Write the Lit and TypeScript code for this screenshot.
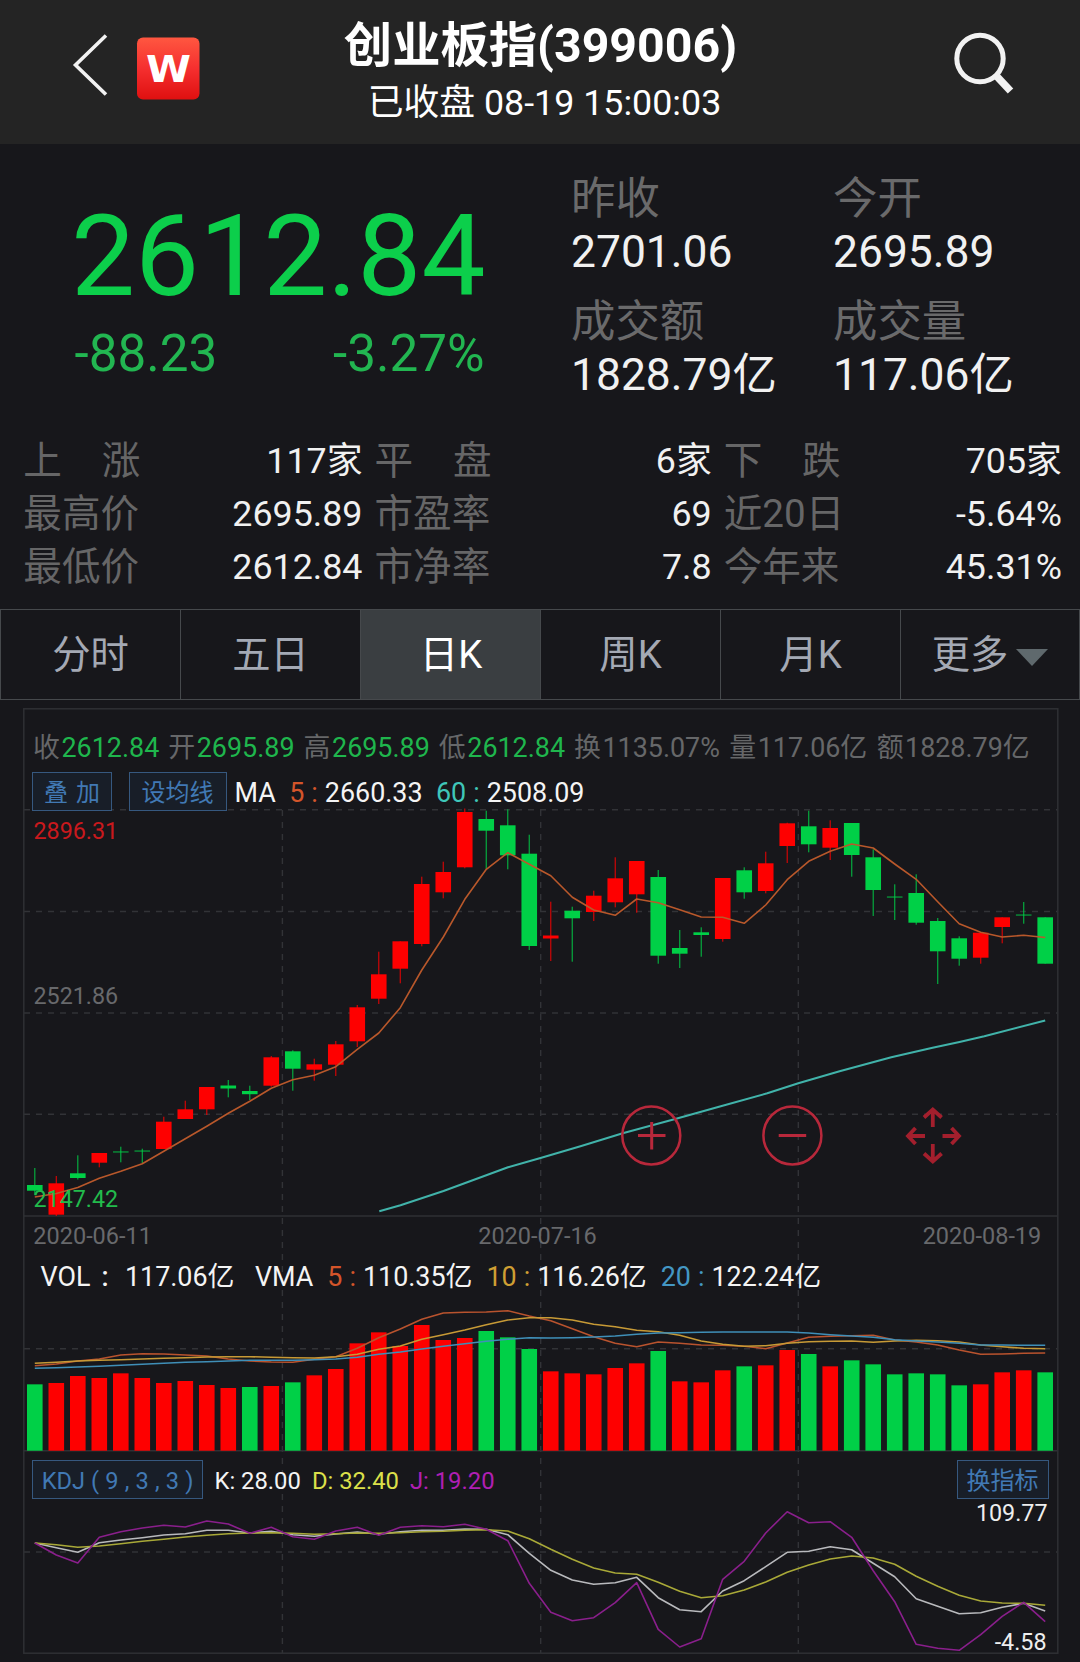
import { LitElement, html, svg, css } from "lit";
import { customElement } from "lit/decorators.js";

const UP = "#fe0000";
const DOWN = "#00d047";

// Trend flag, then high, body top, body bottom and low of each session, in canvas units
type Candle = [string, number, number, number, number];
const CANDLES: Candle[] = [
  ["d", 1168, 1185, 1190.7, 1195], ["u", 1176, 1183.3, 1214.7, 1216], ["d", 1155.3, 1173.3, 1178, 1179.5],
  ["u", 1153, 1153, 1162.7, 1167.3], ["d", 1146.7, 1151.3, 1152.6, 1162.3], ["d", 1148.7, 1150.4, 1151.7, 1163],
  ["u", 1116.7, 1121.7, 1149, 1149], ["u", 1100.7, 1109.3, 1119, 1119], ["u", 1087, 1087, 1109.3, 1115],
  ["d", 1080, 1085.5, 1088.5, 1097.3], ["d", 1085.7, 1091, 1094.2, 1100], ["u", 1056, 1057.3, 1085.7, 1086.7],
  ["d", 1050.3, 1051.3, 1068.7, 1090.7], ["u", 1058.7, 1064.3, 1069.7, 1080.7], ["u", 1041, 1044.3, 1064.7, 1076],
  ["u", 1005, 1007.3, 1041.3, 1047], ["u", 951.7, 974.3, 998.7, 1004], ["u", 941.3, 941.3, 968.7, 983.3],
  ["u", 876.7, 884, 944, 946.3], ["u", 861.7, 872, 892.3, 898.3], ["u", 808.5, 812, 867.3, 868.3],
  ["d", 810.7, 819, 830.7, 869], ["d", 809.3, 825.3, 855.3, 869.3], ["d", 834.7, 853.7, 946, 950],
  ["u", 901.7, 935.5, 938.5, 961], ["d", 906.7, 910.7, 918.3, 961.7], ["u", 890.7, 895.7, 912, 921],
  ["u", 857.3, 878.3, 902.3, 907.3], ["u", 861, 861, 894.3, 912.7], ["d", 870, 877, 955.7, 963.7],
  ["d", 930, 948, 953.7, 968], ["d", 927.3, 932.3, 935, 956.7], ["u", 878, 878, 939, 941.7],
  ["d", 867.3, 870.3, 892.3, 898.7], ["u", 851.7, 863.3, 891, 893.3], ["u", 822.7, 823.3, 846, 863],
  ["d", 810.7, 826.3, 844.3, 852.3], ["u", 820.3, 828, 847.7, 860], ["d", 823, 823, 855, 876.7],
  ["d", 849.3, 857.3, 890, 916], ["d", 884.3, 896.4, 897.7, 920], ["d", 874.3, 893, 922.7, 924.7],
  ["d", 918, 921, 951.3, 984], ["d", 936.3, 938.3, 958.7, 965.7], ["u", 932.7, 932.7, 957.7, 963.7],
  ["u", 917.3, 917.3, 927, 943.3], ["d", 902, 914.4, 915.7, 923.7], ["d", 917.3, 917.3, 963.7, 963.7],
];

const MA5 = [1197, 1193.5, 1187.5, 1178.3, 1171.3, 1163.7, 1151.3, 1138.7, 1126.3, 1113.3, 1101.3, 1088.3, 1079.7, 1075.3, 1066.7, 1049.3, 1033, 1007.7, 970, 937, 899.3, 869.3, 852.7, 864.3, 875.7, 897.3, 910, 915.3, 899, 902.7, 909.7, 917, 917.3, 923.3, 905, 879.7, 861.3, 851.3, 844, 848, 864, 879.3, 901.7, 923.7, 932.3, 937, 935.3, 937.5];
const MA60: [number, number][] = [[379.3, 1211.3], [400.5, 1205.3], [443.5, 1191], [508, 1167.3], [540.5, 1158], [581.3, 1146], [622.7, 1133.3], [674.3, 1119.3], [719, 1106.7], [767.3, 1093.3], [798.3, 1083.3], [839.6, 1071.3], [891.3, 1057.3], [932.6, 1047.7], [959.5, 1042], [984.3, 1036.3], [1045.2, 1020.5]];

// Volume pane: a third of a unit per step, measured from y = 1250
const VOL_TOPS = [403, 399, 378, 384, 370, 384, 399, 393, 405, 414, 411, 408, 397, 376, 357, 280, 247, 288, 225, 270, 264, 243, 262, 297, 364, 370, 373, 354, 340, 303, 394, 397, 361, 349, 346, 300, 312, 349, 331, 343, 373, 370, 373, 406, 403, 367, 361, 367];
const VOL_FALLS = new Set([0, 10, 12, 21, 22, 23, 29, 33, 36, 38, 39, 40, 41, 42, 43, 47]);
const VMA5 = [347, 342, 333, 327, 315, 311, 312, 315, 318, 327, 333, 336, 337, 328, 320, 295, 263, 237, 208, 189, 187, 186, 182, 198, 212, 236, 260, 280, 290, 276, 280, 285, 286, 289, 296, 279, 262, 259, 257, 256, 270, 276, 285, 300, 313, 312, 310, 309];
const VMA10 = [340, 337, 333, 331, 329, 327, 325, 323, 321, 320, 320, 322, 323, 324, 320, 313, 298, 288, 268, 254, 240, 224, 210, 203, 203, 210, 223, 230, 241, 245, 256, 273, 283, 289, 287, 280, 275, 274, 273, 277, 273, 271, 272, 276, 285, 290, 295, 296];
const VMA20 = [355, 353, 351, 349, 346, 343, 340, 337, 335, 333, 331, 331, 331, 329, 327, 322, 313, 306, 297, 289, 281, 274, 268, 263, 264, 263, 261, 258, 253, 249, 248, 247, 246, 246, 246, 246, 249, 254, 258, 262, 269, 273, 276, 280, 285, 285, 286, 286];

// KDJ pane: a third of a unit per step, measured from y = 1450
const KDJ_K = [279, 293, 307, 278, 270, 263, 255, 251, 241, 241, 249, 244, 254, 259, 252, 246, 253, 245, 241, 241, 237, 238, 254, 310, 361, 390, 403, 398, 382, 443, 479, 485, 423, 392, 350, 307, 304, 290, 299, 340, 380, 446, 469, 491, 488, 472, 460, 483];
const KDJ_D = [279, 284, 292, 288, 281, 274, 268, 261, 256, 251, 249, 248, 250, 253, 251, 249, 250, 248, 245, 244, 241, 239, 243, 266, 298, 328, 354, 369, 373, 397, 424, 443, 437, 420, 396, 367, 345, 327, 318, 324, 343, 379, 409, 436, 453, 459, 460, 466];
const KDJ_J = [279, 315, 339, 262, 245, 234, 226, 231, 213, 222, 250, 232, 260, 268, 243, 232, 256, 232, 227, 230, 223, 238, 272, 400, 487, 512, 503, 458, 398, 538, 591, 566, 388, 334, 249, 185, 218, 215, 262, 362, 455, 583, 595, 601, 554, 499, 457, 515];

const xAt = (i: number) => 34.8 + i * 21.498;
const trace = (ys: number[], base = 0, k = 1) =>
  ys.map((y, i) => `${xAt(i).toFixed(1)},${(base + y * k).toFixed(1)}`).join(" ");

@customElement("kline-canvas")
class KlineCanvas extends LitElement {
  static styles = css`
    :host { display: block; }
    svg { display: block; width: 1036px; height: 947px; font-family: Roboto, "Noto Sans CJK SC", sans-serif; font-size: 23.3px; }
    .dash { stroke: #323337; stroke-width: 1.4; stroke-dasharray: 6 6; }
    .rule { stroke: #2f3034; stroke-width: 1.5; fill: none; }
    .line { fill: none; stroke-width: 1.6; stroke-linejoin: round; }
    .long { stroke-width: 2; }
    .grey { fill: #68696c; }
    .date { font-size: 23.5px; }
    .light { fill: #eeeeee; }
    .tool { fill: none; stroke: #b8283b; stroke-width: 2.5; }
    .bold { stroke-width: 3; }
    .arrows { stroke-width: 3.8; stroke: #a31f2d; }
  `;

  render() {
    return html`<svg viewBox="23 708 1036 947">
      ${[809.7, 911.5, 1013, 1114.3, 1348.7, 1552].map((y) => svg`<line class="dash" x1="24" x2="1057" y1=${y} y2=${y} />`)}
      ${[282.4, 540.7, 798.3].map((x) => svg`<line class="dash" x1=${x} x2=${x} y1="810" y2="1653" />`)}
      <rect class="rule" x="23.8" y="708.8" width="1034" height="944.4" />
      <line class="rule" x1="24" x2="1057" y1="1216" y2="1216" />
      <line class="rule" x1="24" x2="1057" y1="1450.7" y2="1450.7" />
      ${CANDLES.map(([t, h, a, b, l], i) => {
        const c = t === "u" ? UP : DOWN;
        return svg`<rect x=${xAt(i) - 0.6} y=${h} width="1.2" height=${l - h} fill=${c} opacity=".8" />
          <rect x=${xAt(i) - 7.8} y=${a} width="15.6" height=${b - a} fill=${c} opacity=${b - a < 2 ? 0.7 : 1} />`;
      })}
      <polyline class="line" stroke="#b9582b" points=${trace(MA5)} />
      <polyline class="line long" stroke="#41b3aa" points=${MA60.map((p) => p.join(",")).join(" ")} />
      <text x="33.5" y="838.7" fill="#c9191d">2896.31</text>
      <text class="grey" x="33.5" y="1004.2">2521.86</text>
      <text x="33.5" y="1207.2" fill="#22bb4c">2147.42</text>
      <text class="grey date" x="33.3" y="1244.2">2020-06-11</text>
      <text class="grey date" x="537.5" y="1244.2" text-anchor="middle">2020-07-16</text>
      <text class="grey date" x="1041.3" y="1244.2" text-anchor="end">2020-08-19</text>

      ${VOL_TOPS.map((v, i) => svg`<rect x=${xAt(i) - 7.8} y=${1250 + v / 3} width="15.6" height=${200.7 - v / 3} fill=${VOL_FALLS.has(i) ? DOWN : UP} />`)}
      <polyline class="line" stroke="#b9532e" points=${trace(VMA5, 1250, 1 / 3)} />
      <polyline class="line" stroke="#c79a36" points=${trace(VMA10, 1250, 1 / 3)} />
      <polyline class="line" stroke="#3f8fb8" points=${trace(VMA20, 1250, 1 / 3)} />

      <polyline class="line" stroke="#b9babd" points=${trace(KDJ_K, 1450, 1 / 3)} />
      <polyline class="line" stroke="#a9a938" points=${trace(KDJ_D, 1450, 1 / 3)} />
      <polyline class="line" stroke="#8a1f8c" points=${trace(KDJ_J, 1450, 1 / 3)} />
      <text class="light" x="1047.5" y="1521.2" text-anchor="end">109.77</text>
      <text class="light" x="1046.5" y="1650.2" text-anchor="end">-4.58</text>

      <g class="tool">
        <circle cx="651.3" cy="1135.5" r="29" />
        <path class="bold" d="M638 1135.5h27.5M651.7 1122v27.5" />
        <circle cx="792.4" cy="1135.5" r="29" />
        <path class="bold" d="M778.7 1135.5h27.5" />
        <path class="arrows" d="M932.8 1110v17M924 1117.500l8.800-8 8.800 8M932.800 1144v17M924 1153.500l8.800 8 8.800-8M908.500 1136h16.500M915.500 1128l-7.500 8 7.500 8M942.500 1136h16.500M951.500 1128l7.500 8-7.500 8" />
      </g>
    </svg>`;
  }
}

const FACTS = [
  ["昨收", "2701.06"], ["今开", "2695.89"],
  ["成交额", "1828.79亿"], ["成交量", "117.06亿"],
];
const STATS = [
  ["上涨", "117家"], ["平盘", "6家"], ["下跌", "705家"],
  ["最高价", "2695.89"], ["市盈率", "69"], ["近20日", "-5.64%"],
  ["最低价", "2612.84"], ["市净率", "7.8"], ["今年来", "45.31%"],
];
const TABS = ["分时", "五日", "日K", "周K", "月K", "更多"];
const INFO = [
  ["收", "2612.84", "down"], ["开", "2695.89", "down"], ["高", "2695.89", "down"], ["低", "2612.84", "down"],
  ["换", "1135.07%", "flat"], ["量", "117.06亿", "flat"], ["额", "1828.79亿", "flat"],
];

const legend = (key: string, value: string, tone: string) =>
  html`<span class="legend"><span class=${tone}>${key}</span><span class=${tone}>:</span><span>${value}</span></span>`;

@customElement("app-root")
class AppRoot extends LitElement {
  static styles = css`
    :host { display: block; width: 1080px; height: 1662px; overflow: hidden; background: #17171b; color: #f1f1f1;
      font-family: Roboto, "Noto Sans CJK SC", sans-serif; }
    * { box-sizing: border-box; }
    .header { height: 144px; background: #242424; display: flex; justify-content: space-between; color: #fff; }
    .side { width: 210px; height: 144px; flex: none; display: block; }
    .titles { display: flex; flex-direction: column; align-items: center; padding: 18px 0 0 1px; gap: 9px; white-space: nowrap; }
    .title { font-size: 48.3px; line-height: 56px; font-weight: 700; }
    .sub { font-size: 35.8px; line-height: 40px; padding-left: 8px; }
    .mark { font: 700 37px "DejaVu Sans", sans-serif; fill: #fff; }

    .quote { height: 291px; display: flex; }
    .price { width: 412px; margin-left: 73px; padding-top: 54px; color: #0ccf4b; }
    .last { font-size: 114px; line-height: 116px; margin-left: -2px; white-space: nowrap; }
    .change { display: flex; justify-content: space-between; font-size: 51.2px; line-height: 50px; margin-top: 15px; padding-left: 1.5px; padding-right: 0.5px; color: #22b651; }
    .facts { margin-left: 86px; padding-top: 27px; display: grid; grid-template-columns: 262px 240px; grid-auto-rows: 108px; row-gap: 14.5px;
      font-size: 44.4px; line-height: 54px; align-content: start; white-space: nowrap; }
    .muted { color: #6a6a6b; line-height: 56px; margin-bottom: -2px; }

    .stats { display: grid; grid-template-columns: 338.5px 336.5px 337.5px; column-gap: 12.7px; grid-auto-rows: 53px; padding-left: 24px; font-size: 35.8px; line-height: 53px; }
    .stat { display: flex; justify-content: space-between; white-space: nowrap; }
    .name { width: 117px; display: flex; justify-content: space-between; font-size: 38.6px; color: #666667; margin-left: -0.7px; line-height: 52px; }

    .tabs { margin-top: 15px; height: 91px; display: grid; grid-template-columns: repeat(5, 180px) 1fr; border: 1.5px solid #46494c; }
    .tab { display: flex; align-items: center; justify-content: center; gap: 8px; font-size: 38.3px; line-height: 40px; color: #a4a9b4; border-right: 1px solid #46494c; padding-top: 1px; }
    .tab:last-child { border-right: 0; }
    .tab.active { background: #3a3e41; color: #fff; padding-left: 1px; }
    .caret { display: block; width: 32px; height: 17px; margin-top: 4px; }

    .panel { position: relative; margin: 8px 0 0 23px; width: 1036px; height: 947px; font-size: 26.9px; white-space: nowrap; }
    .canvas { position: absolute; inset: 0; }
    .layer { position: relative; height: 947px; display: flex; flex-direction: column; }
    .row { display: flex; align-items: center; line-height: 36px; }
    .info { height: 38px; margin-top: 21px; padding-left: 10px; gap: 9px; color: #666769; }
    .down { color: #1fb64d; margin-left: 1.6px; }
    .flat { margin-left: 1.5px; margin-right: 0.4px; }
    .ma { height: 39px; margin-top: 5px; padding-left: 9px; }
    .vol { height: 36px; margin-top: 447.5px; padding-left: 17.5px; }
    .kdj { height: 39px; margin-top: 165.5px; padding-left: 9px; padding-right: 10.5px; font-size: 23.8px; }
    .btn { border: 1.5px solid #36587f; background: #181e28; color: #4179b4; height: 39px; display: flex; align-items: center; justify-content: center; font-size: 24px; padding-top: 3px; }
    .text { color: #f4f4f4; padding-top: 2px; }
    .overlay { width: 80px; word-spacing: 2px; margin-right: 16.5px; }
    .averages { width: 98px; margin-right: 8px; }
    .setup { width: 171px; font-size: 23.6px; word-spacing: 0.3px; margin-right: 11.5px; padding-top: 2px; }
    .swap { width: 92px; margin-left: auto; }
    .legend { display: inline-flex; gap: 7px; margin-left: 14px; color: #f4f4f4; }
    .ma .legend { padding-top: 2px; margin-left: 13.4px; }
    .white { color: #f4f4f4; }
    .lead { width: 34.5px; padding-left: 11px; font-weight: 500; }
    .vma { margin-left: 20.4px; }
    .orange { color: #d4552a; }
    .teal { color: #3fc6b9; }
    .gold { color: #cf9f33; }
    .blue { color: #4497c4; }
    .k, .d, .j { margin-right: 11px; }
    .d { color: #dce04a; }
    .j { color: #b01fb3; }
  `;

  render() {
    return html`
      <div class="header">
        <svg class="side" viewBox="0 0 210 144">
          <defs><linearGradient id="g" x1="0" y1="0" x2="0" y2="1"><stop offset="0" stop-color="#ff5740" /><stop offset=".5" stop-color="#f52f2f" /><stop offset="1" stop-color="#df1010" /></linearGradient></defs>
          <path d="M106 35.500L75.500 65l30.500 29.500" fill="none" stroke="#f2f2f2" stroke-width="3.600" />
          <rect x="137" y="37.500" width="62.500" height="62" rx="6" fill="url(#g)" />
          <text class="mark" x="146" y="82" textLength="45" lengthAdjust="spacingAndGlyphs">W</text>
        </svg>
        <div class="titles"><div class="title">创业板指(399006)</div><div class="sub">已收盘 08-19 15:00:03</div></div>
        <svg class="side" viewBox="870 0 210 144">
          <circle cx="980" cy="58.500" r="23.200" fill="none" stroke="#f2f2f2" stroke-width="5" />
          <path d="M996.500 76L1010.500 91" stroke="#f2f2f2" stroke-width="7.500" />
        </svg>
      </div>

      <div class="quote">
        <div class="price">
          <div class="last">2612.84</div>
          <div class="change"><span>-88.23</span><span>-3.27%</span></div>
        </div>
        <div class="facts">
          ${FACTS.map(([n, v]) => html`<div><div class="muted">${n}</div><div>${v}</div></div>`)}
        </div>
      </div>

      <div class="stats">
        ${STATS.map(([n, v]) => html`<div class="stat"><span class="name">${n.length === 2 ? [...n].map((c) => html`<span>${c}</span>`) : n}</span><span>${v}</span></div>`)}
      </div>

      <div class="tabs">
        ${TABS.map((t, i) => html`<div class="tab ${i === 2 ? "active" : ""}">${t}${i === 5 ? html`<svg class="caret" viewBox="0 0 32 17"><path d="M0 0h32L16 17z" fill="#5f696d" /></svg>` : ""}</div>`)}
      </div>

      <div class="panel">
        <kline-canvas class="canvas"></kline-canvas>
        <div class="layer">
          <div class="row info">${INFO.map(([n, v, c]) => html`<span>${n}<span class=${c}>${v}</span></span>`)}</div>
          <div class="row ma">
            <span class="btn overlay">叠 加</span><span class="btn averages">设均线</span>
            <span class="text">MA</span>${legend("5", "2660.33", "orange")}${legend("60", "2508.09", "teal")}
          </div>
          <div class="row vol">
            <span class="white">VOL</span><span class="white lead">:</span><span class="white">117.06亿</span><span class="white vma">VMA</span>
            ${legend("5", "110.35亿", "orange")}${legend("10", "116.26亿", "gold")}${legend("20", "122.24亿", "blue")}
          </div>
          <div class="row kdj">
            <span class="btn setup">KDJ ( 9 , 3 , 3 )</span>
            <span class="text k">K: 28.00</span><span class="text d">D: 32.40</span><span class="text j">J: 19.20</span>
            <span class="btn swap">换指标</span>
          </div>
        </div>
      </div>
    `;
  }
}
